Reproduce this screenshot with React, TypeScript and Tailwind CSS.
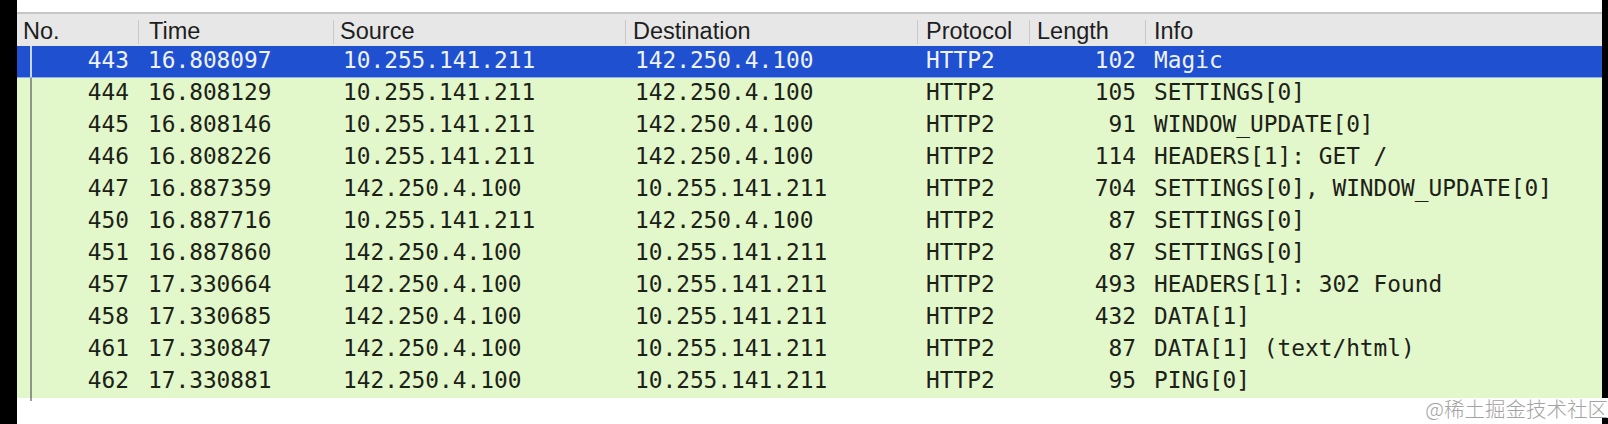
import React from 'react'

type Packet = {
  no:     string
  time:   string
  src:    string
  dst:    string
  proto:  string
  len:    string
  info:   string
}

const PACKETS: Packet[] = [
  { no: '443', time: '16.808097', src: '10.255.141.211', dst: '142.250.4.100',  proto: 'HTTP2', len: '102', info: 'Magic' },
  { no: '444', time: '16.808129', src: '10.255.141.211', dst: '142.250.4.100',  proto: 'HTTP2', len: '105', info: 'SETTINGS[0]' },
  { no: '445', time: '16.808146', src: '10.255.141.211', dst: '142.250.4.100',  proto: 'HTTP2', len: '91',  info: 'WINDOW_UPDATE[0]' },
  { no: '446', time: '16.808226', src: '10.255.141.211', dst: '142.250.4.100',  proto: 'HTTP2', len: '114', info: 'HEADERS[1]: GET /' },
  { no: '447', time: '16.887359', src: '142.250.4.100',  dst: '10.255.141.211', proto: 'HTTP2', len: '704', info: 'SETTINGS[0], WINDOW_UPDATE[0]' },
  { no: '450', time: '16.887716', src: '10.255.141.211', dst: '142.250.4.100',  proto: 'HTTP2', len: '87',  info: 'SETTINGS[0]' },
  { no: '451', time: '16.887860', src: '142.250.4.100',  dst: '10.255.141.211', proto: 'HTTP2', len: '87',  info: 'SETTINGS[0]' },
  { no: '457', time: '17.330664', src: '142.250.4.100',  dst: '10.255.141.211', proto: 'HTTP2', len: '493', info: 'HEADERS[1]: 302 Found' },
  { no: '458', time: '17.330685', src: '142.250.4.100',  dst: '10.255.141.211', proto: 'HTTP2', len: '432', info: 'DATA[1]' },
  { no: '461', time: '17.330847', src: '142.250.4.100',  dst: '10.255.141.211', proto: 'HTTP2', len: '87',  info: 'DATA[1] (text/html)' },
  { no: '462', time: '17.330881', src: '142.250.4.100',  dst: '10.255.141.211', proto: 'HTTP2', len: '95',  info: 'PING[0]' },
]

const COLS = 'grid grid-cols-[121px_195px_292px_292px_112px_116px_1fr]'

function HeaderCell({ label, gap, first }: { label: string; gap: string; first?: boolean }) {
  return (
    <div className="flex items-center h-full">
      {!first && <div className="w-px h-[24px] bg-[#c8c8c8]" />}
      <span className={gap}>{label}</span>
    </div>
  )
}

function PacketRow({ p, selected }: { p: Packet; selected: boolean }) {
  return (
    <div
      className={
        COLS + ' h-[32px] leading-[28px] whitespace-pre ' +
        (selected
          ? 'bg-[#1f50d0] text-[#eef2fc] border-b border-[#8eaef0]'
          : 'bg-[#e2f7ca] text-[#1c2118]')
      }
    >
      <div className="flex h-full">
        <div className="w-[13px]" />
        <div className={'w-[2px] h-full ' + (selected ? 'bg-[#c9d7f7]' : 'bg-[#8e9488]')} />
        <div className="flex-1 text-right pr-[9px]">{p.no}</div>
      </div>
      <div className="pl-[10px]">{p.time}</div>
      <div className="pl-[10px]">{p.src}</div>
      <div className="pl-[10px]">{p.dst}</div>
      <div className="pl-[9px]">{p.proto}</div>
      <div className="text-right pr-[9px]">{p.len}</div>
      <div className="pl-[9px]">{p.info}</div>
    </div>
  )
}

export default function App() {
  return (
    <div className="relative flex w-[1608px] h-[424px] bg-white overflow-hidden">
      <div className="w-[17px] h-full bg-black" />

      <div className="flex-1 flex flex-col">
        {/* top gap */}
        <div className="h-[14px] bg-white border-b-2 border-[#c6c6c6]" />

        {/* column header */}
        <div className={COLS + ' h-[32px] bg-[#e7e7e7] text-[#1e1e1e] text-[23.5px] font-["Liberation_Sans",Arial,sans-serif]'}>
          <HeaderCell label="No." gap="ml-[6px]" first />
          <HeaderCell label="Time" gap="ml-[10px]" />
          <HeaderCell label="Source" gap="ml-[6px]" />
          <HeaderCell label="Destination" gap="ml-[7px]" />
          <HeaderCell label="Protocol" gap="ml-[8px]" />
          <HeaderCell label="Length" gap="ml-[7px]" />
          <HeaderCell label="Info" gap="ml-[8px]" />
        </div>

        {/* packet list */}
        <div className='text-[22.8px] font-["DejaVu_Sans_Mono",monospace]'>
          {PACKETS.map((p, i) => (
            <PacketRow key={p.no} p={p} selected={i === 0} />
          ))}
        </div>
        <div className="flex h-[3px]">
          <div className="w-[13px]" />
          <div className="w-[2px] h-full bg-[#9a9f95]" />
        </div>
      </div>

      <div className="w-[6px] h-full bg-black" />

      {/* watermark */}
      <span className='absolute right-0 bottom-[6px] bg-white text-[20.5px] leading-[20px] text-[#a3a3a3] font-["Noto_Sans_CJK_SC",sans-serif] font-light'>
        @稀土掘金技术社区
      </span>
    </div>
  )
}
